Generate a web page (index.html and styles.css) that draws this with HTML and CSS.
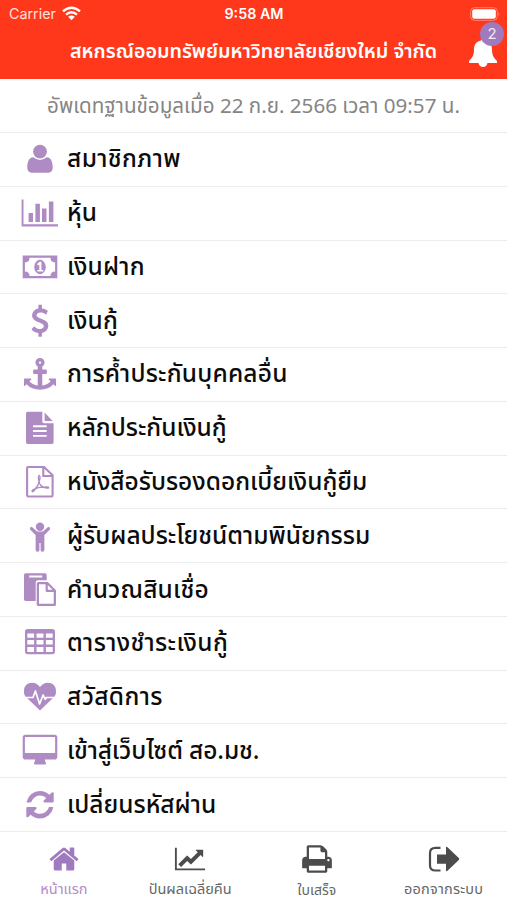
FILE: index.html
```
<!DOCTYPE html>
<html lang="th">
<head>
  <meta charset="UTF-8">
  <meta name="viewport" content="width=device-width, initial-scale=1.0">
  <title>สหกรณ์ออมทรัพย์มหาวิทยาลัยเชียงใหม่ จำกัด</title>
  <link rel="stylesheet" href="styles.css">
</head>
<body>
  <header class="header">
    <div class="status">
      <div class="carrier">
        <span>Carrier</span>
        <svg width="19" height="15" viewBox="0 0 19 15" fill="none" stroke="#fff" stroke-width="2.3">
          <path d="M1 5.4Q9.5-2 18 5.4M4 8.6Q9.5 4 15 8.6"/>
          <path d="M6.2 10.8Q9.5 8.2 12.8 10.8L9.5 14.2Z" fill="#fff" stroke="none"/>
        </svg>
      </div>
      <span class="time">9:58 AM</span>
      <div class="power">
        <svg width="31" height="14" viewBox="0 0 31 14">
          <rect x=".7" y=".7" width="26.6" height="12.6" rx="3.6" fill="none" stroke="#ff8370"/>
          <rect x="2.2" y="2.2" width="23.6" height="9.6" rx="2" fill="#fff"/>
          <path d="M28.5 5q2 2 0 4z" fill="#ff8370"/>
        </svg>
      </div>
    </div>
    <h1 class="title">สหกรณ์ออมทรัพย์มหาวิทยาลัยเชียงใหม่ จำกัด</h1>
    <div class="bell">
      <svg width="30" height="30" viewBox="0 0 30 30" fill="#fff">
        <path d="M15 0q2 0 2 2.500c5 1 7 4.500 7 9 0 7 2.500 8.500 5 11.500v2H1v-2c2.500-3 5-4.500 5-11.500 0-4.500 2-8 7-9Q13 0 15 0zM10.500 24.500h9a4.500 4.500 0 0 1-9 0z"/>
      </svg>
      <span class="badge">2</span>
    </div>
  </header>

  <p class="updated">อัพเดทฐานข้อมูลเมื่อ 22 ก.ย. 2566 เวลา 09:57 น.</p>

  <ul class="menu">
    <li>
      <svg class="icon" viewBox="0 0 40 36"><circle cx="20" cy="10.600" r="6.900"/><path d="M13.500 16.300q6.500 5.600 13 0c4.500 0 6.200 4.500 6.200 10.500 0 3-1.600 4.900-4.200 4.900h-17c-2.600 0-4.200-1.900-4.200-4.900 0-6 1.700-10.500 6.200-10.500z"/></svg>
      <span class="wide">สมาชิกภาพ</span>
    </li>
    <li>
      <svg class="icon" viewBox="0 0 40 36"><path d="M1.600 4.400h1.900v24.800H38v2.200H1.600zM8.600 18H13v9H8.600zM15.400 8.700h4.500V27h-4.500zM22 13.400h4.500V27H22zM28.900 6.400h4.500V27h-4.500z"/></svg>
      <span>หุ้น</span>
    </li>
    <li>
      <svg class="icon" viewBox="0 0 40 36"><path fill-rule="evenodd" d="M2.700 6.600h34.600v22.700H2.700zM9.500 8.800q0 4.600-4.600 4.600v9.200q4.600 0 4.600 4.500h21q0-4.500 4.600-4.500v-9.200q-4.600 0-4.600-4.600z"/><ellipse cx="20" cy="18" rx="5.800" ry="7.200"/><path d="M17 14.900l2.600-2.100h1.800v8.300h1.900v1.500h-6v-1.500h2v-5.700l-1.300 1z" fill="#fff"/></svg>
      <span>เงินฝาก</span>
    </li>
    <li>
      <svg class="icon" viewBox="0 0 40 36"><path transform="translate(4 1.700) scale(.01786)" d="M1362 1185q0 153-99.500 263.500t-258.500 136.500v175q0 14-9 23t-23 9h-135q-13 0-22.500-9.500t-9.500-22.500v-175q-66-9-127.500-31t-101.500-44.500-74-48-46.500-37.500-17.500-18q-17-21-2-41l103-135q7-10 23-12 15-2 24 9l2 2q113 99 243 125 37 8 74 8 81 0 142.500-43t61.500-122q0-28-15-53t-33.500-42-58.500-37.500-66-32-80-32.500q-39-16-61.500-25t-61.500-26.500-62.500-31-56.500-35.500-53.500-42.500-43.500-49-35.500-58-21-66.500-8.500-78q0-138 98-242t255-134v-180q0-13 9.500-22.500t22.500-9.500h135q14 0 23 9t9 23v176q57 6 110.500 23t87 33.500 63.500 37.500 39 29 15 14q17 18 5 38l-81 146q-8 15-23 16-14 3-27-7-3-3-14.500-12t-39-26.500-58.500-32-74.500-26-85.500-11.500q-95 0-155 43t-60 111q0 26 8.500 48t29.500 41.500 39.500 33 56 31 60.500 27 70 27.500q53 20 81 31.500t76 35 75.500 42.500 62 50 53 63.500 31.500 76.500 13 94z"/></svg>
      <span>เงินกู้</span>
    </li>
    <li>
      <svg class="icon" viewBox="0 0 40 36"><path transform="translate(4 2) scale(.01786)" d="M960 256q0-26-19-45t-45-19-45 19-19 45 19 45 45 19 45-19 19-45zm832 928v352q0 22-20 30-8 2-12 2-12 0-23-9l-93-93q-119 143-318.500 226.500t-429.500 83.500-429.500-83.500-318.500-226.500l-93 93q-9 9-23 9-4 0-12-2-20-8-20-30v-352q0-14 9-23t23-9h352q22 0 30 20 8 19-7 35l-100 100q67 91 189.500 153.500t271.500 82.500v-647h-192q-26 0-45-19t-19-45v-128q0-26 19-45t45-19h192v-163q-58-34-93-92.500t-35-128.500q0-106 75-181t181-75 181 75 75 181q0 70-35 128.500t-93 92.500v163h192q26 0 45 19t19 45v128q0 26-19 45t-45 19h-192v647q149-20 271.500-82.500t189.500-153.500l-100-100q-15-16-7-35 8-20 30-20h352q14 0 23 9t9 23z"/></svg>
      <span>การค้ำประกันบุคคลอื่น</span>
    </li>
    <li>
      <svg class="icon" viewBox="0 0 40 36"><path fill-rule="evenodd" d="M7.700 1.700h14.600v9.900q0 1.700 1.700 1.700h9.600v19q0 1.700-1.700 1.700H7.700Q6 34 6 32.300V3.400q0-1.700 1.700-1.700zM13 15.300v1.900h13.700v-1.900zM13 20.100V22h13.700v-1.900zM13 24.900v1.900h13.700v-1.900z"/><path d="M24.600 2.500l8 8.500h-8z"/></svg>
      <span class="tight">หลักประกันเงินกู้</span>
    </li>
    <li>
      <svg class="icon line" viewBox="0 0 40 36"><path stroke-width="2.100" d="M8.300 3H24l8.600 8.300v20q0 1.200-1.200 1.200H8.300q-1.200 0-1.200-1.200v-27Q7.100 3 8.300 3zM23.300 3v9h9"/><path stroke-width="1.300" d="M19.400 11.500c-1.600-.5-.8 5.500.2 8 1.500 3.500 4 4.200 7.400 4.600 2.300.3 2.200-1.200 0-1.200-4 0-9.300.6-12.700 2.300-3.700 1.800-2.100 3.600-.1 1.300 2.600-3 4.700-6.500 5.500-10.500.4-2 .4-4.300-.3-4.500z"/></svg>
      <span class="tight">หนังสือรับรองดอกเบี้ยเงินกู้ยืม</span>
    </li>
    <li>
      <svg class="icon" viewBox="0 0 40 36"><circle cx="20" cy="8.700" r="4.200"/><path d="M12.500 9.500l4.700 4.100h5.600l4.700-4.100c1.500-1.200 3.500.5 2.200 2.200l-5.300 5.200v15q0 1.800-1.900 1.800t-1.900-1.800v-7h-1.200v7q0 1.800-1.900 1.800t-1.900-1.800v-15l-5.300-5.200c-1.300-1.700.7-3.400 2.200-2.200z"/></svg>
      <span class="tight">ผู้รับผลประโยชน์ตามพินัยกรรม</span>
    </li>
    <li>
      <svg class="icon" viewBox="0 0 40 36"><path fill-rule="evenodd" d="M5.600 1.300h19.500q1.600 0 1.600 1.600v5.400H18q-2.300 0-2.300 2.300v18.300H5.600Q4 28.900 4 27.300V2.900q0-1.600 1.600-1.600zM9.200 3.600v2h13v-2z"/><path fill-rule="evenodd" d="M18.300 9.900h9.500l8.200 8.300v14.200q0 1.600-1.600 1.600H18.300q-1.600 0-1.600-1.600V11.500q0-1.600 1.600-1.600zM19 12.200v19.500h14.700V20h-6.500q-1.600 0-1.600-1.600v-6.200zM27.800 13v4.800h4.700z"/></svg>
      <span>คำนวณสินเชื่อ</span>
    </li>
    <li>
      <svg class="icon" viewBox="0 0 40 36"><path fill-rule="evenodd" d="M7.800 4h24.400Q35 4 35 6.800v19.700q0 2.800-2.800 2.800H7.800Q5 29.300 5 26.500V6.800Q5 4 7.800 4zM7.300 8.600v4.200h6.800V8.600zM16.500 8.600v4.200h7V8.600zM25.900 8.600v4.200h6.800V8.600zM7.300 15v4.600h6.800V15zM16.500 15v4.600h7V15zM25.900 15v4.600h6.800V15zM7.300 21.900v4.500q0 .7.700.7h6.100v-5.200zM16.500 21.900v5.200h7v-5.200zM25.900 21.900v5.200H32q.7 0 .7-.7v-4.500z"/></svg>
      <span class="wide">ตารางชำระเงินกู้</span>
    </li>
    <li>
      <svg class="icon" viewBox="0 0 40 36"><path d="M20 31.500L7.500 19.600C3.800 16.500 4 13.700 4 12.200c0-5.300 3.200-8.400 8.500-8.400 3 0 5.500 1.800 7.500 4.200 2-2.400 4.500-4.200 7.500-4.200 5.300 0 8.500 3.100 8.500 8.400 0 1.500.2 4.300-3.500 7.400z"/><path d="M4 18.500h9l2.400-6.500 4.200 13 3.500-9 2.200 4.300 1-1.800H36" fill="none" stroke="#fff" stroke-width="1.700" stroke-linejoin="round"/></svg>
      <span class="wide">สวัสดิการ</span>
    </li>
    <li>
      <svg class="icon" viewBox="0 0 40 36"><path fill-rule="evenodd" d="M5.500 1.700h29q2.800 0 2.800 2.800v19.300q0 2.800-2.800 2.800h-9.700q0 2 1 3 .5 1.800-.8 1.800H15q-1.300 0-.8-1.800 1-1 1-3H5.500q-2.800 0-2.800-2.800V4.500q0-2.800 2.800-2.800zM5.500 3.900q-.6 0-.6.600V20h30.200V4.500q0-.6-.6-.6z"/></svg>
      <span class="tighter">เข้าสู่เว็บไซต์ สอ.มช.</span>
    </li>
    <li>
      <svg class="icon" viewBox="0 0 40 36"><path transform="translate(4 1.700) scale(.01786)" d="M1639 1056q0 5-1 7-64 268-268 434.500t-478 166.500q-146 0-282.500-55t-243.500-157l-129 129q-19 19-45 19t-45-19-19-45v-448q0-26 19-45t45-19h448q26 0 45 19t19 45-19 45l-137 137q71 66 161 102t187 36q134 0 250-65t186-179q11-17 53-117 8-23 30-23h192q13 0 22.500 9.500t9.500 22.500zm25-800v448q0 26-19 45t-45 19h-448q-26 0-45-19t-19-45 19-45l138-138q-148-137-349-137-134 0-250 65t-186 179q-11 17-53 117-8 23-30 23h-199q-13 0-22.500-9.500t-9.500-22.500v-7q65-268 270-434.500t480-166.500q146 0 284 55.500t245 156.500l130-129q19-19 45-19t45 19 19 45z"/></svg>
      <span class="tight">เปลี่ยนรหัสผ่าน</span>
    </li>
  </ul>

  <nav class="tabs">
    <a class="tab active">
      <svg width="32" height="32" viewBox="0 0 1792 1792"><path d="M1472 992v480q0 26-19 45t-45 19h-384v-384h-256v384h-384q-26 0-45-19t-19-45v-480q0-1 .5-3t.5-3l575-474 575 474q1 2 1 6zm223-69l-62 74q-8 9-21 11h-3q-13 0-21-7l-692-577-692 577q-12 8-24 7-13-2-21-11l-62-74q-8-10-7-23.500t11-21.500l719-599q32-26 76-26t76 26l244 204v-195q0-14 9-23t23-9h192q14 0 23 9t9 23v408l219 182q10 8 11 21.500t-7 23.500z"/></svg>
      <span>หน้าแรก</span>
    </a>
    <a class="tab">
      <svg width="32" height="32" viewBox="-64 -196 2176 2176"><path d="M2048 1536v128h-2048v-1536h128v1408h1920zm-128-1248v435q0 21-19.500 29.500t-35.500-7.500l-121-121-633 633q-10 10-23 10t-23-10l-233-233-416 416-192-192 585-585q10-10 23-10t23 10l233 233 464-464-121-121q-16-16-7.500-35.500t29.500-19.500h435q14 0 23 9t9 23z"/></svg>
      <span>ปันผลเฉลี่ยคืน</span>
    </a>
    <a class="tab">
      <svg width="32" height="32" viewBox="0 0 1792 1792"><path d="M448 1536h896v-256h-896v256zm0-640h896v-384h-160q-40 0-68-28t-28-68v-160h-640v640zm1152 64q0-26-19-45t-45-19-45 19-19 45 19 45 45 19 45-19 19-45zm128 0v416q0 13-9.500 22.500t-22.500 9.500h-224v160q0 40-28 68t-68 28h-960q-40 0-68-28t-28-68v-160h-224q-13 0-22.500-9.500t-9.500-22.500v-416q0-79 56.500-135.500t135.500-56.500h64v-544q0-40 28-68t68-28h672q40 0 88 20t76 48l152 152q28 28 48 76t20 88v256h64q79 0 135.500 56.500t56.500 135.500z"/></svg>
      <span class="narrow">ใบเสร็จ</span>
    </a>
    <a class="tab">
      <svg width="32" height="32" viewBox="0 0 32 32"><path d="M12.500 4.800H7.500Q2 4.800 2 10v12.500q0 5 5.500 5h5" fill="none" stroke="#4c4c4c" stroke-width="2.200"/><path d="M9 11.600h9V4.800q0-1.600 1.500-.5L30.800 15q1 1 0 2L19.500 27.800q-1.500 1.200-1.500-.5v-6.500H9z"/></svg>
      <span class="roomy">ออกจากระบบ</span>
    </a>
  </nav>
</body>
</html>
```
FILE: styles.css
```
* {
  box-sizing: border-box;
}
body {
  margin: 0;
  height: 900px;
  display: flex;
  flex-direction: column;
  overflow: hidden;
  background: #fff;
  color: #0c0c0c;
  font-family: "Noto Sans Thai", "Noto Sans", "Open Sans", sans-serif;
}
.header {
  position: relative;
  height: 79px;
  background: #ff371b;
  color: #fff;
}
.status {
  display: grid;
  grid-template-columns: 1fr 80px 1fr;
  align-items: center;
  height: 27px;
  padding: 0 6px 0 9px;
  font-family: Inter, sans-serif;
  font-size: 14.3px;
}
.carrier {
  display: flex;
  align-items: center;
  gap: 6px;
}
.carrier span {
  opacity: .85;
}
.time {
  padding-right: 2px;
  text-align: center;
  font-weight: 600;
  font-size: 14.3px;
}
.power {
  display: flex;
  justify-content: flex-end;
}
.title {
  display: flex;
  justify-content: center;
  align-items: center;
  height: 50px;
  margin: 0;
  font-size: 19.7px;
  font-weight: 600;
  white-space: nowrap;
}
.bell {
  position: absolute;
  left: 468px;
  top: 38px;
}
.badge {
  position: absolute;
  left: 12px;
  top: -16px;
  width: 24px;
  height: 24px;
  border-radius: 50%;
  background: #a07abf;
  color: #f3e6f2;
  font-family: Inter, sans-serif;
  font-size: 15px;
  line-height: 24px;
  text-align: center;
}
.updated {
  display: flex;
  justify-content: center;
  align-items: center;
  height: 54px;
  margin: 0;
  padding-top: 2px;
  border-bottom: 1px solid #ececec;
  color: #858585;
  font-size: 20.6px;
  white-space: nowrap;
}
.menu {
  margin: 0;
  padding: 0;
  list-style: none;
}
.menu li {
  display: flex;
  align-items: center;
  gap: 7px;
  height: 53.77px;
  padding-left: 20px;
  border-bottom: 1px solid #ececec;
  font-size: 24.5px;
  font-weight: 500;
  line-height: 50px;
  letter-spacing: .2px;
  white-space: nowrap;
}
.menu span {
  padding-top: 2px;
}
.menu .tight {
  letter-spacing: 0;
}
.menu .tighter {
  letter-spacing: -.1px;
}
.menu .wide {
  letter-spacing: .4px;
}
.icon {
  width: 40px;
  height: 36px;
  fill: #af8bc3;
}
.line {
  fill: none;
  stroke: #af8bc3;
}
.tabs {
  display: grid;
  grid-template-columns: repeat(4, 1fr);
  height: 68px;
}
.tab {
  display: flex;
  flex-direction: column;
  align-items: center;
  padding-top: 11px;
  color: #666;
  font-size: 14.5px;
  line-height: 31px;
  white-space: nowrap;
}
.tab svg {
  fill: #4c4c4c;
}
.tab .narrow {
  font-size: 14px;
}
.tab .roomy {
  letter-spacing: .2px;
}
.active {
  padding-left: 1px;
  color: #b48cc8;
}
.active svg {
  fill: #a07abf;
}
```
